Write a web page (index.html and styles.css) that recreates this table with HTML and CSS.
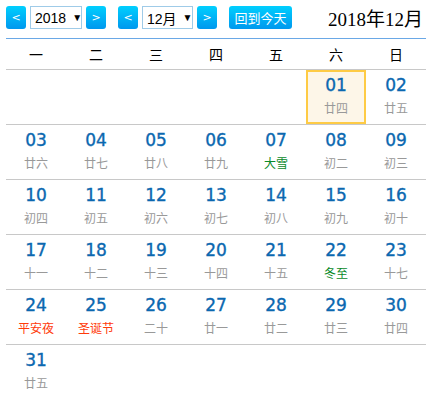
FILE: index.html
```html
<!DOCTYPE html>
<html>
<head>
<meta charset="utf-8">
<link rel="stylesheet" href="styles.css">
</head>
<body>
<div class="cal">
  <div class="bar">
    <button class="btn arrow">&lt;</button>
    <div class="sel year">2018<span class="tri">▼</span></div>
    <button class="btn arrow">&gt;</button>
    <button class="btn arrow gap">&lt;</button>
    <div class="sel month">12月<span class="tri">▼</span></div>
    <button class="btn arrow">&gt;</button>
    <button class="btn today">回到今天</button>
    <div class="title">2018年12月</div>
  </div>
  <div class="grid">
    <div class="wk">一</div><div class="wk">二</div><div class="wk">三</div><div class="wk">四</div><div class="wk">五</div><div class="wk">六</div><div class="wk">日</div>

    <div class="day"></div><div class="day"></div><div class="day"></div><div class="day"></div><div class="day"></div>
    <div class="day cur"><div class="n">01</div><div class="l">廿四</div></div>
    <div class="day"><div class="n">02</div><div class="l">廿五</div></div>

    <div class="day"><div class="n">03</div><div class="l">廿六</div></div>
    <div class="day"><div class="n">04</div><div class="l">廿七</div></div>
    <div class="day"><div class="n">05</div><div class="l">廿八</div></div>
    <div class="day"><div class="n">06</div><div class="l">廿九</div></div>
    <div class="day"><div class="n">07</div><div class="l term">大雪</div></div>
    <div class="day"><div class="n">08</div><div class="l">初二</div></div>
    <div class="day"><div class="n">09</div><div class="l">初三</div></div>

    <div class="day"><div class="n">10</div><div class="l">初四</div></div>
    <div class="day"><div class="n">11</div><div class="l">初五</div></div>
    <div class="day"><div class="n">12</div><div class="l">初六</div></div>
    <div class="day"><div class="n">13</div><div class="l">初七</div></div>
    <div class="day"><div class="n">14</div><div class="l">初八</div></div>
    <div class="day"><div class="n">15</div><div class="l">初九</div></div>
    <div class="day"><div class="n">16</div><div class="l">初十</div></div>

    <div class="day"><div class="n">17</div><div class="l">十一</div></div>
    <div class="day"><div class="n">18</div><div class="l">十二</div></div>
    <div class="day"><div class="n">19</div><div class="l">十三</div></div>
    <div class="day"><div class="n">20</div><div class="l">十四</div></div>
    <div class="day"><div class="n">21</div><div class="l">十五</div></div>
    <div class="day"><div class="n">22</div><div class="l term">冬至</div></div>
    <div class="day"><div class="n">23</div><div class="l">十七</div></div>

    <div class="day"><div class="n">24</div><div class="l fest">平安夜</div></div>
    <div class="day"><div class="n">25</div><div class="l fest">圣诞节</div></div>
    <div class="day"><div class="n">26</div><div class="l">二十</div></div>
    <div class="day"><div class="n">27</div><div class="l">廿一</div></div>
    <div class="day"><div class="n">28</div><div class="l">廿二</div></div>
    <div class="day"><div class="n">29</div><div class="l">廿三</div></div>
    <div class="day"><div class="n">30</div><div class="l">廿四</div></div>

    <div class="day last"><div class="n">31</div><div class="l">廿五</div></div>
  </div>
</div>
</body>
</html>
```
FILE: styles.css
```css
html, body {
  margin: 0;
  padding: 0;
  background: #fff;
}
body {
  font-family: "DejaVu Sans", "Noto Sans CJK SC", sans-serif;
}
.cal {
  padding: 6px 2px 0 6px;
  width: 420px;
}
.bar {
  display: flex;
  align-items: center;
  height: 23px;
  margin-bottom: 9px;
}
.btn {
  border: 0;
  margin: 0;
  padding: 0;
  height: 23px;
  border-radius: 3px;
  background: linear-gradient(#00cffe, #0098ee);
  color: #fff;
  font-family: "DejaVu Sans", "Noto Sans CJK SC", sans-serif;
  font-size: 12px;
  display: flex;
  align-items: center;
  justify-content: center;
}
.arrow {
  width: 20px;
  font-size: 11px;
}
.gap {
  margin-left: 12px;
}
.sel {
  height: 23px;
  box-sizing: border-box;
  border: 1px solid #9fcbe8;
  margin: 0 4px;
  display: flex;
  align-items: center;
  white-space: nowrap;
  font-family: "Liberation Sans", "Noto Sans CJK SC", sans-serif;
  font-size: 14px;
  color: #000;
  padding-left: 4px;
}
.year { width: 52px; }
.month { width: 51px; }
.tri {
  font-size: 10px;
  margin-left: 6px;
}
.today {
  width: 63px;
  margin-left: 12px;
  font-family: "Noto Sans CJK SC", sans-serif;
  font-size: 13px;
}
.title {
  margin-left: auto;
  font-family: "Liberation Serif", "Noto Sans CJK SC", serif;
  font-size: 19px;
  color: #000;
  padding-right: 3px;
}
.grid {
  display: grid;
  grid-template-columns: repeat(7, 60px);
  border-top: 1px solid #6aa8e6;
}
.wk {
  height: 30px;
  line-height: 30px;
  text-align: center;
  font-family: "Noto Sans CJK SC", sans-serif;
  font-size: 14px;
  color: #000;
  border-bottom: 1px solid #c8c8c8;
}
.day {
  height: 54px;
  border-bottom: 1px solid #c8c8c8;
  text-align: center;
}
.day.last {
  border-bottom: 0;
}
.n {
  padding-top: 5px;
  height: 20px;
  line-height: 20px;
  font-size: 17px;
  -webkit-text-stroke: 0.35px #0b68b0;
  color: #0b68b0;
}
.l {
  margin-top: 5px;
  line-height: 16px;
  font-family: "Noto Sans CJK SC", sans-serif;
  font-size: 12px;
  color: #999;
}
.l.term { color: #0a8a2a; }
.l.fest { color: #ff3a0a; }
.cur {
  background: #fdf6e8;
  box-shadow: inset 0 0 0 2px #fecb45;
}
```
